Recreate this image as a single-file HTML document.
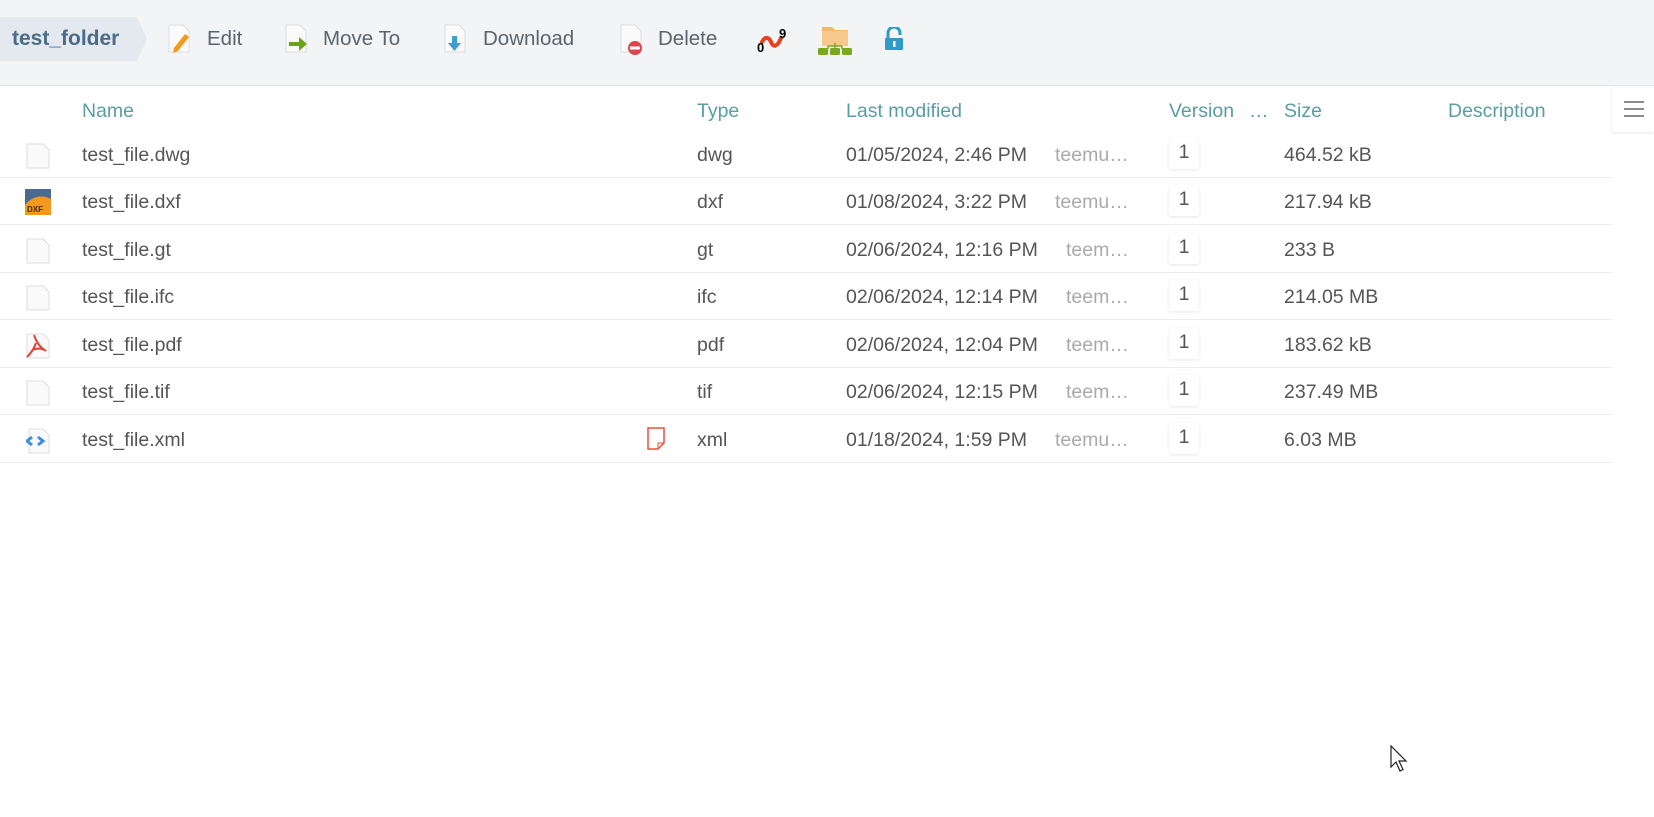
<!DOCTYPE html>
<html><head><meta charset="utf-8"><style>
*{margin:0;padding:0;box-sizing:border-box}
body{width:1654px;height:817px;background:#fff;font-family:"Liberation Sans",sans-serif;position:relative;overflow:hidden}
.tb{position:absolute;left:0;top:0;width:1654px;height:86px;background:#f2f4f6;border-bottom:1px solid #e4e7ea}
.crumb{position:absolute;left:0;top:17px;height:44px;width:137px;background:#e3e9ef;color:#4a6b8a;font-weight:bold;font-size:21px;line-height:44px;padding-left:12px}
.crumb:after{content:"";position:absolute;right:-10px;top:0;border-left:10px solid #e3e9ef;border-top:22px solid transparent;border-bottom:22px solid transparent}
.tt{position:absolute;top:27px;font-size:20.5px;color:#5a6570;line-height:24px}
.ic{position:absolute}
.h{position:absolute;top:99px;font-size:19.5px;color:#5a9ea3;line-height:24px}
.row{position:absolute;left:0;width:1612px;height:47px;border-bottom:1px solid #ececec}
.c{position:absolute;font-size:19.5px;color:#555;line-height:24px;top:12px;white-space:nowrap}
.a{color:#aaa}
.v{position:absolute;left:1169px;top:7px;width:30px;height:31px;background:#fff;box-shadow:0 1px 3px rgba(0,0,0,.1);border-radius:3px;font-size:19.5px;color:#555;text-align:center;line-height:29px}
.fi{position:absolute;left:26px;top:12px}
</style></head><body>
<div class="tb">
<div class="crumb">test_folder</div>
<svg class="ic" style="left:168px;top:24px" width="24" height="30"><path d="M1 1h14l6 6v21H1z" fill="#fafafa" stroke="#ddd"/><path d="M17 10l4 3-11 14-5 2 1-5z" fill="#f39a1e"/></svg>
<div class="tt" style="left:207px">Edit</div>
<svg class="ic" style="left:285px;top:24px" width="26" height="30"><path d="M1 1h14l6 6v21H1z" fill="#fafafa" stroke="#ddd"/><path d="M4 18h10v-5l8 7-8 7v-5H4z" fill="#6aa21a"/></svg>
<div class="tt" style="left:323px">Move To</div>
<svg class="ic" style="left:444px;top:24px" width="24" height="30"><path d="M1 1h14l6 6v21H1z" fill="#fafafa" stroke="#ddd"/><path d="M8 12h5v7h4l-6.5 8L4 19h4z" fill="#3aa0cc"/></svg>
<div class="tt" style="left:483px">Download</div>
<svg class="ic" style="left:620px;top:24px" width="26" height="32"><path d="M1 1h14l6 6v21H1z" fill="#fafafa" stroke="#ddd"/><circle cx="15" cy="24" r="7" fill="#d9464c"/><rect x="10" y="22.5" width="10" height="3" fill="#fff"/></svg>
<div class="tt" style="left:658px">Delete</div>
<svg class="ic" style="left:755px;top:26px" width="36" height="28"><path d="M7 16c3-6 7-5 9 0s6 6 10-4" stroke="#e8401c" stroke-width="4" fill="none" stroke-linecap="round"/><text x="2" y="26" font-family="Liberation Sans" font-weight="bold" font-size="13" fill="#000">0</text><text x="24" y="12" font-family="Liberation Sans" font-weight="bold" font-size="13" fill="#000">9</text></svg>
<svg class="ic" style="left:818px;top:26px" width="36" height="30"><path d="M4 1h10l3 3h13v16H4z" fill="#f0b86a"/><rect x="4" y="5" width="26" height="15" fill="#f7c98c"/><path d="M10 20v3M17 17v6M24 20v3M10 20h14" stroke="#7aa91c" stroke-width="1.5" fill="none"/><rect x="0" y="22" width="10" height="7" rx="1.5" fill="#7aa91c"/><rect x="12" y="22" width="10" height="7" rx="1.5" fill="#7aa91c"/><rect x="24" y="22" width="10" height="7" rx="1.5" fill="#7aa91c"/></svg>
<svg class="ic" style="left:885px;top:27px" width="19" height="24"><path d="M3 11V6a6 6 0 0 1 12 0v2" stroke="#2e9bc6" stroke-width="3" fill="none"/><rect x="0" y="11" width="18" height="12" rx="1" fill="#2e9bc6"/><rect x="8" y="14" width="2.5" height="6" fill="#fff"/></svg>
</div>
<div class="h" style="left:82px">Name</div>
<div class="h" style="left:697px">Type</div>
<div class="h" style="left:846px">Last modified</div>
<div class="h" style="left:1169px">Version</div>
<div class="h" style="left:1249px">…</div>
<div class="h" style="left:1284px">Size</div>
<div class="h" style="left:1448px">Description</div>
<div style="position:absolute;left:1612px;top:88px;width:42px;height:44px;background:#fff;box-shadow:0 1px 3px rgba(0,0,0,.1)"><svg style="position:absolute;left:12px;top:13px" width="20" height="16"><path d="M0 1h20M0 8h20M0 15h20" stroke="#666" stroke-width="1.5"/></svg></div>

<div class="row" style="top:131px"><svg class="fi" width="25" height="26"><path d="M1 1h16l6 6v18H1z" fill="#fafafa" stroke="#ddd"/></svg><div class="c" style="left:82px">test_file.dwg</div><div class="c" style="left:697px">dwg</div><div class="c" style="left:846px">01/05/2024, 2:46 PM</div><div class="c a" style="left:1055px">teemu…</div><div class="v">1</div><div class="c" style="left:1284px">464.52 kB</div></div>
<div class="row" style="top:178px"><svg class="fi" style="top:11px;left:25px" width="26" height="26"><rect width="26" height="26" fill="#f39a1e"/><path d="M0 0h26v10C18 6 8 6 0 16z" fill="#4a6a92"/><text x="2" y="23" font-family="Liberation Sans" font-size="8" font-weight="bold" fill="#3a2a10">DXF</text></svg><div class="c" style="left:82px">test_file.dxf</div><div class="c" style="left:697px">dxf</div><div class="c" style="left:846px">01/08/2024, 3:22 PM</div><div class="c a" style="left:1055px">teemu…</div><div class="v">1</div><div class="c" style="left:1284px">217.94 kB</div></div>
<div class="row" style="top:226px"><svg class="fi" width="25" height="26"><path d="M1 1h16l6 6v18H1z" fill="#fafafa" stroke="#ddd"/></svg><div class="c" style="left:82px">test_file.gt</div><div class="c" style="left:697px">gt</div><div class="c" style="left:846px">02/06/2024, 12:16 PM</div><div class="c a" style="left:1066px">teem…</div><div class="v">1</div><div class="c" style="left:1284px">233 B</div></div>
<div class="row" style="top:273px"><svg class="fi" width="25" height="26"><path d="M1 1h16l6 6v18H1z" fill="#fafafa" stroke="#ddd"/></svg><div class="c" style="left:82px">test_file.ifc</div><div class="c" style="left:697px">ifc</div><div class="c" style="left:846px">02/06/2024, 12:14 PM</div><div class="c a" style="left:1066px">teem…</div><div class="v">1</div><div class="c" style="left:1284px">214.05 MB</div></div>
<div class="row" style="top:321px"><svg class="fi" width="25" height="26"><path d="M1 1h16l6 6v18H1z" fill="#fafafa" stroke="#ddd"/><path d="M8 2c2 6 5 12 12 16M10 10c-2 6-5 10-9 14M6 17c5-2 10-2 14 1" stroke="#e0443a" stroke-width="2" fill="none"/></svg><div class="c" style="left:82px">test_file.pdf</div><div class="c" style="left:697px">pdf</div><div class="c" style="left:846px">02/06/2024, 12:04 PM</div><div class="c a" style="left:1066px">teem…</div><div class="v">1</div><div class="c" style="left:1284px">183.62 kB</div></div>
<div class="row" style="top:368px"><svg class="fi" width="25" height="26"><path d="M1 1h16l6 6v18H1z" fill="#fafafa" stroke="#ddd"/></svg><div class="c" style="left:82px">test_file.tif</div><div class="c" style="left:697px">tif</div><div class="c" style="left:846px">02/06/2024, 12:15 PM</div><div class="c a" style="left:1066px">teem…</div><div class="v">1</div><div class="c" style="left:1284px">237.49 MB</div></div>
<div class="row" style="top:416px"><svg class="fi" width="25" height="26"><path d="M3 1h14l6 6v18H3z" fill="#fafafa" stroke="#ddd"/><path d="M6 9l-5 4 5 4M12 9l5 4-5 4" stroke="#3a8fe0" stroke-width="3" fill="none"/></svg><svg style="position:absolute;left:647px;top:11px" width="18" height="23"><path d="M1 1h16v15l-6 6H1z" fill="#fff" stroke="#e8503a" stroke-width="1.5"/><path d="M17 16h-6v6" fill="none" stroke="#e8503a" stroke-width="1"/></svg><div class="c" style="left:82px">test_file.xml</div><div class="c" style="left:697px">xml</div><div class="c" style="left:846px">01/18/2024, 1:59 PM</div><div class="c a" style="left:1055px">teemu…</div><div class="v">1</div><div class="c" style="left:1284px">6.03 MB</div></div>

<svg style="position:absolute;left:1390px;top:745px" width="20" height="30"><path d="M1 1v21l5-5 4 9 3-1.5-4-8.5h7z" fill="#fff" stroke="#222" stroke-width="1.2"/></svg>
</body></html>
